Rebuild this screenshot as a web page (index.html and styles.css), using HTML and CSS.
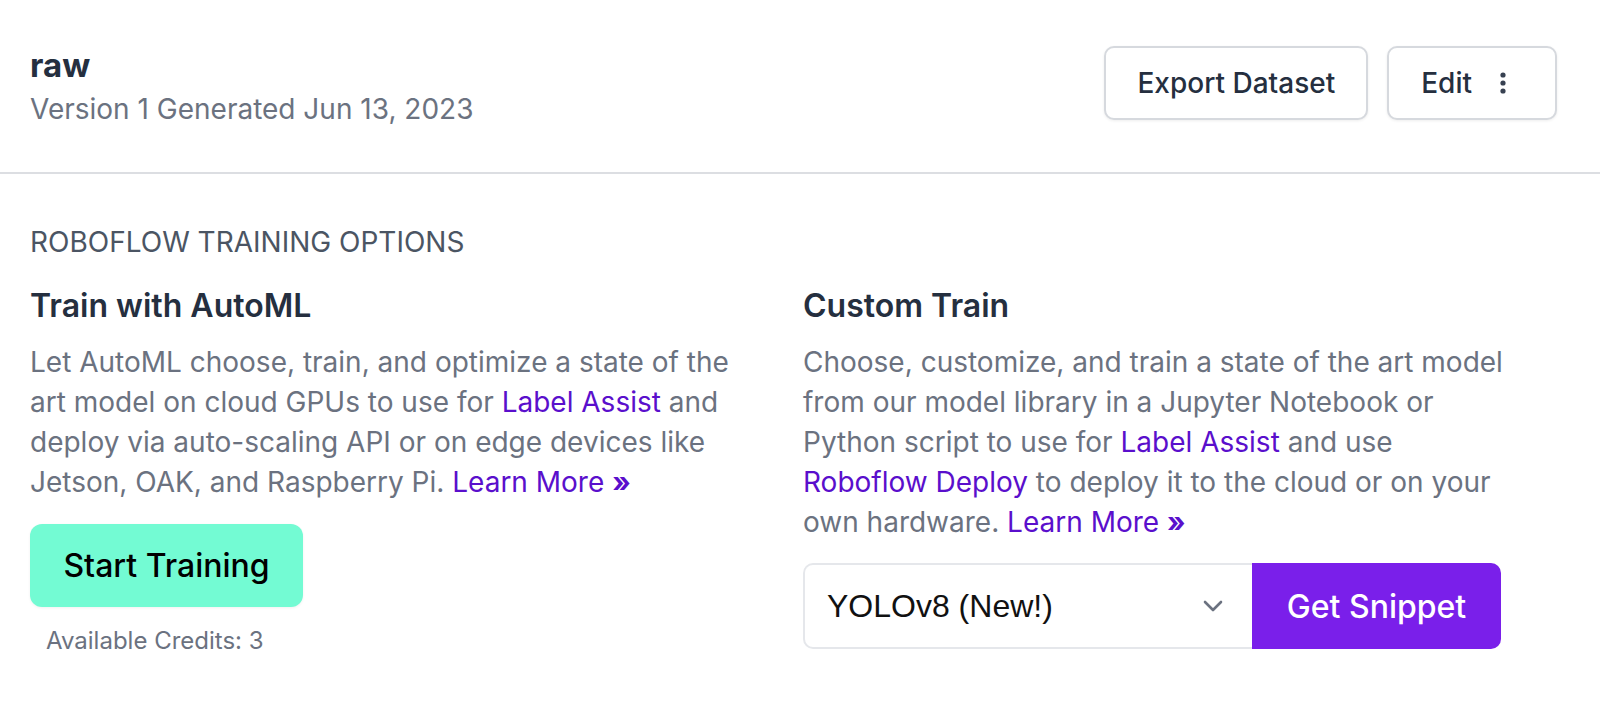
FILE: index.html
```html
<!DOCTYPE html>
<html>
<head>
<meta charset="utf-8">
<link rel="stylesheet" href="styles.css">
</head>
<body>
<div class="page">
  <header class="header">
    <div class="title-block">
      <h1 class="title">raw</h1>
      <div class="subtitle">Version 1 Generated Jun 13, 2023</div>
    </div>
    <div class="actions">
      <button class="btn-outline">Export Dataset</button>
      <button class="btn-outline btn-edit">Edit
        <svg class="dots" width="6" height="22" viewBox="0 0 6 22"><circle cx="3" cy="3" r="2.6" fill="#374151"/><circle cx="3" cy="11" r="2.6" fill="#374151"/><circle cx="3" cy="19" r="2.6" fill="#374151"/></svg>
      </button>
    </div>
  </header>
  <section class="training">
    <div class="section-label">ROBOFLOW TRAINING OPTIONS</div>
    <div class="columns">
      <div class="col">
        <h2 class="col-title">Train with AutoML</h2>
        <p class="desc">Let AutoML choose, train, and optimize a state of the<br>art model on cloud GPUs to use for <a class="link">Label Assist</a> and<br>deploy via auto-scaling API or on edge devices like<br>Jetson, OAK, and Raspberry Pi. <a class="link">Learn More <span class="chev">»</span></a></p>
        <button class="btn-train">Start Training</button>
        <div class="credits">Available Credits: 3</div>
      </div>
      <div class="col">
        <h2 class="col-title">Custom Train</h2>
        <p class="desc">Choose, customize, and train a state of the art model<br>from our model library in a Jupyter Notebook or<br>Python script to use for <a class="link">Label Assist</a> and use<br><a class="link">Roboflow Deploy</a> to deploy it to the cloud or on your<br>own hardware. <a class="link">Learn More <span class="chev">»</span></a></p>
        <div class="snippet-row">
          <div class="select">
            <span class="select-text">YOLOv8 (New!)</span>
            <svg class="caret" width="22" height="14" viewBox="0 0 22 14"><path d="M3 3 L11 11 L19 3" fill="none" stroke="#6b7280" stroke-width="2.6" stroke-linecap="round" stroke-linejoin="round"/></svg>
          </div>
          <button class="btn-snippet">Get Snippet</button>
        </div>
      </div>
    </div>
  </section>
</div>
</body>
</html>
```
FILE: styles.css
```css
* { box-sizing: border-box; }
html, body { margin: 0; padding: 0; background: #fff; }
body { font-family: Inter, "Noto Sans", sans-serif; color: #1f2937; }
.page { width: 1600px; }
.header {
  display: flex;
  justify-content: space-between;
  align-items: flex-start;
  padding: 46px 43px 0 30px;
  height: 174px;
  border-bottom: 2px solid #dcdee2;
}
.title { margin: -1px 0 0 0; font-size: 33px; font-weight: 700; line-height: 40px; color: #252f3f; }
.subtitle { margin-top: 6px; font-size: 28px; line-height: 36px; color: #6b7280; }
.actions { display: flex; gap: 19px; }
.btn-outline {
  font-family: Inter, sans-serif;
  height: 74px;
  padding: 0 31px;
  font-size: 28px;
  font-weight: 500;
  color: #252f3f;
  background: #fff;
  border: 2px solid #d6d9de;
  border-radius: 10px;
  box-shadow: 0 1px 3px rgba(0,0,0,0.07);
  display: flex;
  align-items: center;
}
.btn-edit { gap: 28px; padding: 0 49px 0 32px; }
.dots { display: block; }
.training { padding: 52px 30px 0 30px; }
.section-label { font-size: 28px; line-height: 32px; color: #4b5563; }
.columns { display: grid; grid-template-columns: 773px 773px; margin-top: 26px; }
.col { padding-right: 20px; }
.col-title { margin: 0; font-size: 32px; font-weight: 600; line-height: 44px; color: #252f3f; }
.desc { margin: 14px 0 0 0; font-size: 28px; line-height: 40px; color: #6b7280; white-space: nowrap; }
.link { color: #5a0fcc; text-decoration: none; }
.chev { font-weight: 700; }
.btn-train {
  display: block;
  margin-top: 22px;
  height: 83px;
  width: 273px;
  background: #73fbd3;
  border: none;
  border-radius: 12px;
  font-family: Inter, sans-serif;
  font-size: 32px;
  font-weight: 500;
  color: #000;
  box-shadow: 0 1px 3px rgba(0,0,0,0.06);
}
.credits { margin-top: 19px; padding-left: 16px; font-size: 24px; line-height: 30px; color: #6b7280; }
.snippet-row { display: flex; margin-top: 21px; height: 86px; }
.select {
  width: 449px;
  border: 2px solid #e5e7eb;
  border-right: none;
  border-radius: 10px 0 0 10px;
  display: flex;
  align-items: center;
  justify-content: space-between;
  padding: 0 28px 0 22px;
}
.select-text { font-family: "Liberation Sans", Arial, sans-serif; font-size: 32px; color: #111; }
.btn-snippet {
  width: 249px;
  background: #7a1fea;
  border: none;
  border-radius: 0 10px 10px 0;
  color: #fff;
  font-family: Inter, sans-serif;
  font-size: 32px;
  font-weight: 500;
}
```
